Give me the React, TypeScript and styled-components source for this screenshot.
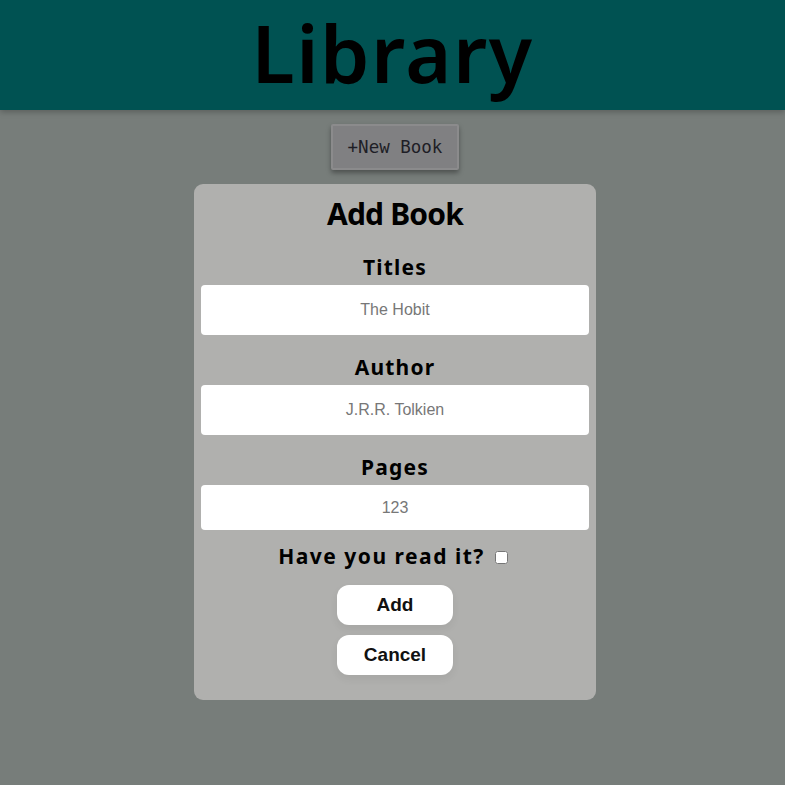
import React from "react";
import styled, { createGlobalStyle } from "styled-components";

const Global = createGlobalStyle`
  html, body { margin: 0; padding: 0; }
  body { background: #777d7a; font-family: "Noto Sans", sans-serif; }
`;

const Page = styled.div`
  min-height: 785px;
  background: #777d7a;
  display: flex;
  flex-direction: column;
  align-items: center;
`;

const Header = styled.header`
  width: 100%;
  height: 110px;
  background: #005252;
  display: flex;
  align-items: center;
  justify-content: center;
  box-shadow: 0 2px 6px rgba(0,0,0,0.25);
`;

const Title = styled.h1`
  margin: -4px 0 0;
  font-family: "Noto Sans", sans-serif;
  font-size: 79px;
  font-weight: 600;
  color: #000;
  line-height: 106px;
  letter-spacing: 1.5px;
`;

const Main = styled.main`
  width: 100%;
  box-sizing: border-box;
  padding-left: 5px;
  display: flex;
  flex-direction: column;
  align-items: center;
`;

const NewButton = styled.button`
  margin-top: 14px;
  width: 128px;
  height: 46px;
  background: #808082;
  border: 2px solid #8b8b8c;
  border-radius: 2px;
  box-shadow: 0 3px 5px rgba(0,0,0,0.35);
  font-family: "DejaVu Sans Mono", monospace;
  font-size: 17.5px;
  color: #1e1e26;
  padding: 0;
`;

const Card = styled.form`
  margin-top: 14px;
  width: 402px;
  box-sizing: border-box;
  background: #b0b0ae;
  border-radius: 9px;
  padding: 12px 7px 25px;
  display: flex;
  flex-direction: column;
  align-items: center;
`;

const CardTitle = styled.h2`
  margin: 0;
  font-family: "Noto Sans", sans-serif;
  font-size: 30px;
  font-weight: 700;
  letter-spacing: -0.8px;
  line-height: 36px;
  color: #000;
`;

const Field = styled.div<{ $first?: boolean }>`
  width: 100%;
  display: flex;
  flex-direction: column;
  align-items: center;
  margin-top: ${(p) => (p.$first ? "23px" : "20px")};
`;

const Label = styled.label`
  font-family: "Noto Sans", sans-serif;
  font-size: 21px;
  font-weight: 700;
  letter-spacing: 1.2px;
  line-height: 24px;
  color: #000;
  margin-bottom: 6px;
`;

const Input = styled.input<{ $h: number }>`
  width: 100%;
  height: ${(p) => p.$h}px;
  box-sizing: border-box;
  border: none;
  border-radius: 4px;
  background: #fff;
  text-align: center;
  font-family: "Liberation Sans", Arial, sans-serif;
  font-size: 16px;
  &::placeholder { color: #777; }
`;

const CheckRow = styled.div`
  margin-top: 13px;
  display: flex;
  align-items: center;
  gap: 10px;
  font-family: "Noto Sans", sans-serif;
  font-size: 21px;
  font-weight: 700;
  letter-spacing: 1.5px;
  color: #000;
  line-height: 26px;
  transform: translateX(-2px);
`;

const Check = styled.input`
  width: 13px;
  height: 13px;
  margin: 2px 0 0;
`;

const Action = styled.button<{ $top: number }>`
  margin-top: ${(p) => p.$top}px;
  width: 116px;
  height: 40px;
  border: none;
  border-radius: 12px;
  background: #fff;
  font-family: "Liberation Sans", Arial, sans-serif;
  font-weight: 700;
  font-size: 19px;
  color: #111;
  box-shadow: 0 4px 8px rgba(0,0,0,0.06);
`;

export default function App() {
  return (
    <Page>
      <Global />
      <Header>
        <Title>Library</Title>
      </Header>
      <Main>
        <NewButton type="button">+New Book</NewButton>
        <Card onSubmit={(e) => e.preventDefault()}>
          <CardTitle>Add Book</CardTitle>
          <Field $first>
            <Label>Titles</Label>
            <Input $h={50} placeholder="The Hobit" />
          </Field>
          <Field>
            <Label>Author</Label>
            <Input $h={50} placeholder="J.R.R. Tolkien" />
          </Field>
          <Field>
            <Label>Pages</Label>
            <Input $h={45} placeholder="123" />
          </Field>
          <CheckRow>
            Have you read it? <Check type="checkbox" />
          </CheckRow>
          <Action type="submit" $top={16}>Add</Action>
          <Action type="button" $top={10}>Cancel</Action>
        </Card>
      </Main>
    </Page>
  );
}
